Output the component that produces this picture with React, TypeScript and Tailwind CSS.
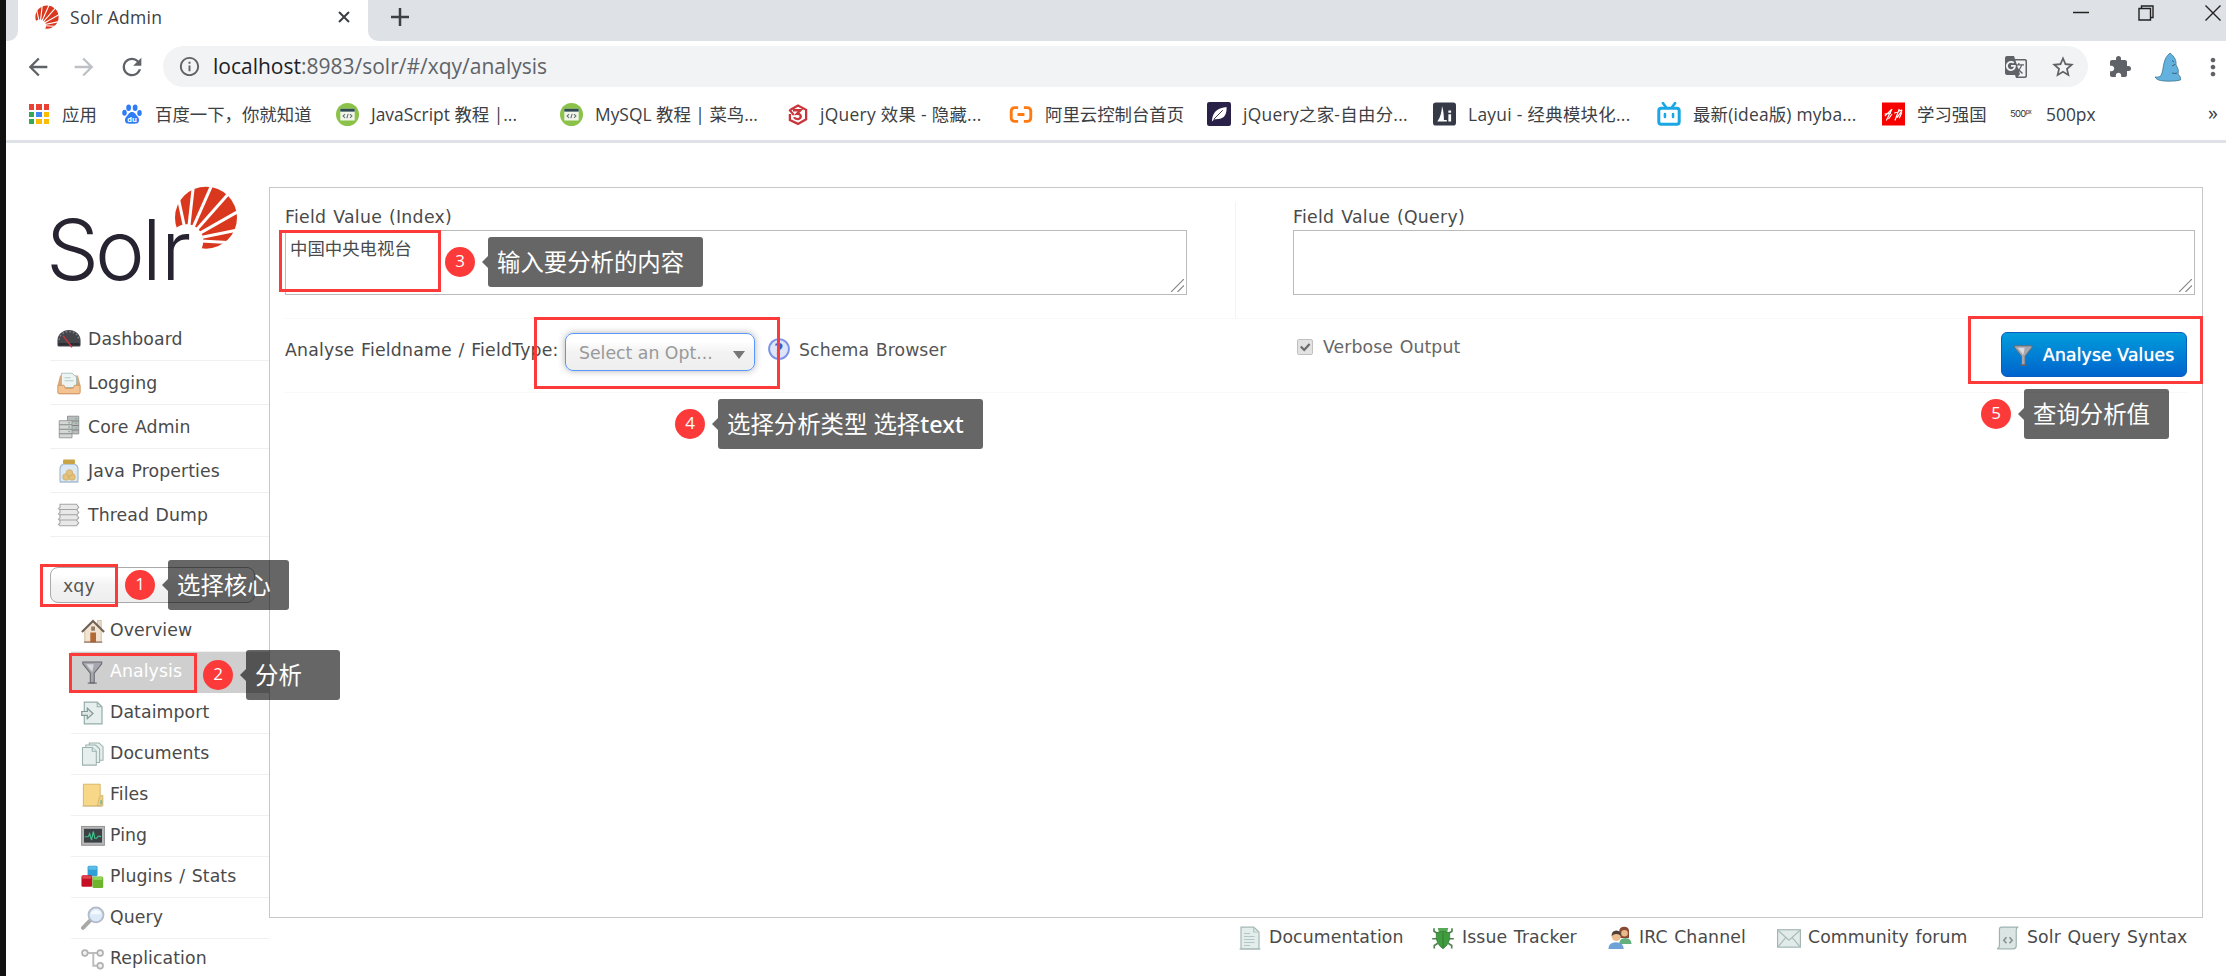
import React from 'react';
import clsx from 'clsx';
import {
  MdArrowBack,
  MdArrowForward,
  MdExtension,
  MdGTranslate,
  MdInfoOutline,
  MdMoreVert,
  MdRefresh,
  MdStarBorder,
} from 'react-icons/md';

interface IconProps {
  className?: string;
  children?: React.ReactNode;
}

function Icon({ className = 'size-6', children }: IconProps) {
  return (
    <svg viewBox="0 0 16 16" className={clsx('shrink-0', className)} fill="none">
      {children}
    </svg>
  );
}

/* ---------- Solr brand ---------- */

function Sunburst() {
  return (
    <g>
      <circle cx="618" cy="173" r="93" fill="#d9381e" />
      <path
        d="M562 241 533 105M562 241 581 70M562 241 640 65M562 241 692 94M562 241 724 149M562 241 724 208M562 241 724 250"
        stroke="#fff"
        strokeWidth="9"
      />
      <circle cx="560" cy="243" r="50" fill="#fff" />
    </g>
  );
}

function SolrLogo() {
  return (
    <svg viewBox="0 0 190 100" className="h-[100px] w-[190px] overflow-visible">
      <g transform="translate(-50 -25) scale(.33333)">
        <Sunburst />
      </g>
      <text x="-4 45 92 111" y="95" fontSize="84" fontWeight="300" fill="#282331" fontFamily="Inter, sans-serif">
        Solr
      </text>
    </svg>
  );
}

/* ---------- bookmark icons ---------- */

function AppsIcon() {
  const colors = ['#ea4335', '#ea4335', '#ea4335', '#34a853', '#4285f4', '#fbbc05', '#34a853', '#fbbc05', '#fbbc05'];
  return (
    <div className="grid h-5 w-5 shrink-0 grid-cols-3 gap-[2px]">
      {colors.map((color, i) => (
        <span key={i} style={{ backgroundColor: color }} />
      ))}
    </div>
  );
}

function BaiduIcon() {
  return (
    <Icon className="h-[22px] w-5">
      <g fill="#2f7cf6">
        <ellipse cx="5.3" cy="3" rx="1.9" ry="2.6" />
        <ellipse cx="10.5" cy="3" rx="1.9" ry="2.6" />
        <ellipse cx="2" cy="7" rx="1.8" ry="2.4" />
        <ellipse cx="14" cy="7.2" rx="1.8" ry="2.4" />
        <path d="M8 6.4c2.400 0 2.800 2 4.400 3.500 1.900 1.800 1.600 5.400-1 5.700-1.600.2-5.200.2-6.800 0-2.600-.3-2.900-3.900-1-5.700C5.200 8.400 5.600 6.400 8 6.400z" />
      </g>
      <text x="8" y="14.300" textAnchor="middle" fontSize="6" fontWeight="700" fill="#fff" fontFamily="Open Sans">du</text>
    </Icon>
  );
}

function RunoobIcon() {
  return (
    <Icon className="size-[23px]">
      <circle cx="8" cy="8" r="8" fill="#8bc34a" />
      <rect x="3" y="4" width="10" height="8.200" rx=".6" fill="#f3f5ea" />
      <rect x="3" y="4" width="10" height="2" fill="#2f4a52" />
      <path d="M6.300 7.800 4.900 9.100l1.400 1.300M9.700 7.800l1.400 1.300-1.400 1.300M8.500 7.500l-1 3.100" stroke="#5b6b6f" strokeWidth=".7" />
    </Icon>
  );
}

function JqueryEffectIcon() {
  return (
    <Icon className="h-[23px] w-5">
      <path d="M1.500 7.500v5L8 15.500l6.500-3.700V4.300L8 .8 2 4.200" stroke="#c9353b" strokeWidth="1.800" />
      <path d="M4 4.600h6L7.200 7.400c3.800-.4 3.900 4.100.8 4.300-1.500.1-2.600-.5-3.200-1.500" stroke="#c9353b" strokeWidth="1.900" />
      <path d="M1 4 4.600 8.400" stroke="#c9353b" strokeWidth="1.600" />
    </Icon>
  );
}

function AliyunIcon() {
  return (
    <Icon className="h-[23px] w-6">
      <path
        d="M6 3.200H3.600A2.400 2.400 0 0 0 1.200 5.600v4.800a2.400 2.400 0 0 0 2.400 2.400H6M10 3.200h2.400a2.400 2.400 0 0 1 2.400 2.400v4.800a2.400 2.400 0 0 1-2.400 2.400H10M5.600 8h4.800"
        stroke="#ff7a10"
        strokeWidth="2"
      />
    </Icon>
  );
}

function FeatherIcon() {
  return (
    <Icon className="h-6 w-6">
      <rect width="16" height="16" rx="1.500" fill="#292147" />
      <path d="M3.300 13c.2-4.500 2-8.800 9.700-9.600.3 3.600-.8 7-4.200 7.800-1.600.4-3 .2-4 .3z" fill="#fff" />
      <path d="M4.500 11.500 10.500 5.500" stroke="#292147" strokeWidth=".6" />
    </Icon>
  );
}

function LayuiIcon() {
  return (
    <Icon className="h-6 w-[23px]">
      <rect width="16" height="16" rx="2" fill="#363a46" />
      <path d="M3 13.200c2.200-2.600 3-6.500 3.300-10.700.9 2.800 1.300 6.400 1.300 9.600h2v1.100z" fill="#fff" />
      <path d="M10.700 8.200h1.900v5h-1.900zM10.700 5.500h1.900v1.600h-1.900z" fill="#fff" />
    </Icon>
  );
}

function BilibiliIcon() {
  return (
    <Icon className="h-6 w-6">
      <path d="M4 .8 6 3.500M12 .8 10 3.500" stroke="#1ba7e4" strokeWidth="1.800" strokeLinecap="round" />
      <rect x="1.200" y="4.200" width="13.600" height="10.600" rx="1.600" stroke="#1ba7e4" strokeWidth="2" />
      <path d="M5.300 8v2M10.700 8v2" stroke="#1ba7e4" strokeWidth="1.700" strokeLinecap="round" />
    </Icon>
  );
}

function XuexiIcon() {
  return (
    <Icon className="h-6 w-[23px]">
      <rect width="16" height="16" fill="#f60000" />
      <path
        d="M2 9.500 6.500 5M3 12.500 7 4.500M1.800 8l4.500-.5M4.500 11.500 7 8M9 12.500l3-8M8.500 7.500 14 5M10.500 10.500 14 5.500M12 11l1.800-4"
        stroke="#fff"
        strokeWidth=".8"
      />
    </Icon>
  );
}

function FiveHundredIcon() {
  return (
    <span className="w-6 shrink-0 overflow-visible whitespace-nowrap font-['Inter',sans-serif] text-[9.5px] tracking-[-0.7px] text-[#333]">
      500<sup className="text-[6px]">px</sup>
    </span>
  );
}

const bookmarks = [
  { label: '应用', icon: <AppsIcon />, width: 'w-[93px]', gap: 'gap-[13px]' },
  { label: '百度一下，你就知道', icon: <BaiduIcon />, width: 'w-[214px]', gap: 'gap-[13px]' },
  { label: 'JavaScript 教程 |...', icon: <RunoobIcon />, width: 'w-[224px]', gap: 'gap-3' },
  { label: 'MySQL 教程 | 菜鸟...', icon: <RunoobIcon />, width: 'w-[228px]', gap: 'gap-3' },
  { label: 'jQuery 效果 - 隐藏...', icon: <JqueryEffectIcon />, width: 'w-[221px]', gap: 'gap-3', tracking: 'tracking-[0.3px]' },
  { label: '阿里云控制台首页', icon: <AliyunIcon />, width: 'w-[198px]', gap: 'gap-3' },
  { label: 'jQuery之家-自由分...', icon: <FeatherIcon />, width: 'w-[226px]', gap: 'gap-3', tracking: 'tracking-[0.3px]' },
  { label: 'Layui - 经典模块化...', icon: <LayuiIcon />, width: 'w-[224px]', gap: 'gap-3', tracking: 'tracking-[0.3px]' },
  { label: '最新(idea版) myba...', icon: <BilibiliIcon />, width: 'w-[225px]', gap: 'gap-3', tracking: 'tracking-[0.2px]' },
  { label: '学习强国', icon: <XuexiIcon />, width: 'w-[128px]', gap: 'gap-3' },
  { label: '500px', icon: <FiveHundredIcon />, width: 'w-[120px]', gap: 'gap-3' },
];

/* ---------- Solr menu icons ---------- */

function DashboardIcon() {
  return (
    <Icon>
      <path d="M.3 12V9a7.700 7 0 0 1 15.400 0v3q0 1-1 1H1.300q-1 0-1-1z" fill="#45464b" />
      <path d="M1.500 8.500a6.500 5.500 0 0 1 13 0" stroke="#85868c" strokeWidth="1" strokeDasharray="1 1.400" />
      <path d="M1 11.500h14" stroke="#2c2d31" strokeWidth="1.600" />
      <path d="M4 5.800 10 13.500" stroke="#c1373c" strokeWidth="1" />
    </Icon>
  );
}

function LoggingIcon() {
  return (
    <Icon>
      <path d="M2 3h12l1.500 6v5.500q0 1-1 1h-13q-1 0-1-1V9z" fill="#d9a878" />
      <path d="M3 1.500h7l3 2.500v7H3z" fill="#edf5f4" stroke="#a3bdbb" strokeWidth=".6" />
      <path d="M5 4.500h4M5 6.500h6" stroke="#b4cbc9" strokeWidth=".8" />
      <path d="M.6 9.500h4l1 2h5l1-2h3.800v4.700q0 .9-.9.900H1.500q-.9 0-.9-.9z" fill="#f3c391" stroke="#cf9460" strokeWidth=".6" />
    </Icon>
  );
}

function ServersIcon() {
  return (
    <Icon>
      <path d="M7 .8h7.500v11.800H7z" fill="#b9bcbc" stroke="#8d8f90" strokeWidth=".6" />
      <path d="M7 4h7.500M7 7h7.500M7 10h7.500" stroke="#77797a" strokeWidth=".6" />
      <path d="M1.500 3.800H10v11.400H1.500z" fill="#d4d7d5" stroke="#939696" strokeWidth=".6" />
      <path d="M1.500 6.500H10M1.500 9.500H10M1.500 12.500H10" stroke="#858888" strokeWidth=".8" />
      <path d="M7.500 5.200h1.300M7.500 8h1.300M7.500 11h1.300M12 2.500h1.300M12 5.500h1.300M12 8.500h1.300" stroke="#8bb59a" strokeWidth="1" />
    </Icon>
  );
}

function JarIcon() {
  return (
    <Icon>
      <path d="M1.500 15.500h13" stroke="#ddd" strokeWidth="1" />
      <path d="M4 3.500h8q2 1 2 3v7.500q0 1.300-1.300 1.300H3.300Q2 15.300 2 14V6.500q0-2 2-3z" fill="#dce9f4" stroke="#a3bcd2" strokeWidth=".8" />
      <rect x="4" y=".4" width="8" height="3" rx=".7" fill="#c9a347" />
      <g fill="#e3c27d" stroke="#c9a45a" strokeWidth=".4">
        <circle cx="6" cy="12" r="2.200" />
        <circle cx="10" cy="12" r="2.200" />
        <circle cx="8.300" cy="9.300" r="2.200" />
      </g>
    </Icon>
  );
}

function ThreadsIcon() {
  return (
    <Icon>
      {[0.8, 4.3, 7.8, 11.3].map(y => (
        <path key={y} d={`M2 ${y}h11l1.500 2-1.500 1.900H2L1 ${y + 3}l1-1z`} fill="#e8e8e8" stroke="#a4a4a4" strokeWidth=".7" />
      ))}
    </Icon>
  );
}

function HouseIcon() {
  return (
    <Icon>
      <path d="M11 1h2.500v5H11z" fill="#e9dcc9" stroke="#b7a48c" strokeWidth=".4" />
      <path d="M2.500 7 8 1.800 13.500 7v8.300h-11z" fill="#f2e4d0" stroke="#c5ae90" strokeWidth=".5" />
      <path d="M.6 8.600 8 1.300l7.400 7.300" stroke="#6f625b" strokeWidth="1.400" />
      <rect x="6.200" y="9" width="3.800" height="6.500" fill="#b06a35" />
      <rect x="6.800" y="5" width="2.500" height="2.800" fill="#927a68" />
      <path d="M2 15.400h12.200" stroke="#8b5f4a" strokeWidth=".7" />
    </Icon>
  );
}

function FunnelIcon({ className }: IconProps) {
  return (
    <Icon className={className}>
      <path d="M1.200 1.300h12.600v1.200L8.800 8.800v6.400H6.200V8.800L1.200 2.500z" fill="#a6a6ae" stroke="#686870" strokeWidth=".7" />
      <path d="M3.500 2.800h5L7.500 8z" fill="#d9d9df" />
      <path d="M4.500 15.400h6" stroke="#60606a" strokeWidth=".7" />
    </Icon>
  );
}

function ImportIcon() {
  return (
    <Icon>
      <path d="M2.200.8h8.600l3.200 3v11.500H2.200z" fill="#e6efee" stroke="#95adab" strokeWidth=".8" />
      <path d="M10.800.8v3H14" stroke="#95adab" strokeWidth=".7" />
      <path d="M.5 7h3.700V4.800L8 8.300l-3.800 3.500V9.600H.5z" fill="#dfe8e6" stroke="#829997" strokeWidth=".8" />
    </Icon>
  );
}

function DocumentsIcon() {
  return (
    <Icon>
      <g fill="#e6efee" stroke="#9bb2b0" strokeWidth=".7">
        <path d="M5.500.6h6.500l2.700 2.500v9H5.500z" />
        <path d="M3.200 2h6.500l2.700 2.500v9.200H3.200z" />
        <path d="M1 3.700h6.500l2.700 2.500v9.200H1z" />
        <path d="M7.500 3.700v2.500h2.700" />
      </g>
    </Icon>
  );
}

function FolderIcon() {
  return (
    <Icon>
      <path d="M1 15.400h13" stroke="#c9bd95" strokeWidth=".7" />
      <path d="M1.600.8h11.200v14.400H1.600z" fill="#f6d888" stroke="#d4b264" strokeWidth=".6" />
      <path d="M14.600 8.200q-2.500 0-2.800 3L11 15.200h3.600z" fill="#ecd08a" stroke="#d0ad5d" strokeWidth=".5" />
      <path d="M13.500 11.500v2.800" stroke="#6dbcae" strokeWidth="1.200" />
    </Icon>
  );
}

function PingIcon() {
  return (
    <Icon>
      <rect x=".4" y="1.600" width="15.200" height="12.600" fill="#b7b7b7" stroke="#8e8e8e" strokeWidth=".6" />
      <rect x="2" y="3.200" width="12" height="9.200" fill="#3c4145" />
      <path d="M2.500 8.500h2.300l1-2 1.200 4.300L8.200 5l1 4.500h1.200l1-1.300h2" stroke="#41c08c" strokeWidth=".8" />
    </Icon>
  );
}

function PluginsIcon() {
  return (
    <Icon>
      <rect x="4.400" y=".5" width="6.600" height="7" rx="1" fill="#2f9fd6" />
      <rect x="4.900" y=".9" width="5.600" height="2.200" rx=".8" fill="#5cbce6" />
      <rect x=".3" y="6.800" width="7.200" height="7.700" rx="1" fill="#c60f22" />
      <rect x=".8" y="7.200" width="6.200" height="2" rx=".8" fill="#e04450" />
      <rect x="7.600" y="7.600" width="7.200" height="7.700" rx="1" fill="#6cb52d" />
      <rect x="8.100" y="8" width="6.200" height="2" rx=".8" fill="#94d457" />
    </Icon>
  );
}

function QueryIcon() {
  return (
    <Icon>
      <path d="M1.300 14.600 6.500 9.300" stroke="#a8a8a8" strokeWidth="2.600" strokeLinecap="round" />
      <circle cx="10" cy="5.900" r="5" fill="#dbe9f9" stroke="#b2bac6" strokeWidth="1.200" />
      <path d="M6.500 5.500a3.600 3.600 0 0 1 7 0z" fill="#f4f9ff" />
    </Icon>
  );
}

function ReplicationIcon() {
  return (
    <Icon>
      <path d="M4.500 4h7M8.200 4v8.500h3" stroke="#bcbcbc" strokeWidth="1.300" />
      <g fill="#f1f1f1" stroke="#b0b0b0" strokeWidth="1.100">
        <circle cx="2.600" cy="4" r="1.900" />
        <circle cx="12.800" cy="4" r="1.900" />
        <circle cx="12.800" cy="12.500" r="1.900" />
      </g>
    </Icon>
  );
}

const mainMenu = [
  { label: 'Dashboard', icon: <DashboardIcon /> },
  { label: 'Logging', icon: <LoggingIcon /> },
  { label: 'Core Admin', icon: <ServersIcon /> },
  { label: 'Java Properties', icon: <JarIcon /> },
  { label: 'Thread Dump', icon: <ThreadsIcon /> },
];

const coreMenu = [
  { label: 'Overview', icon: <HouseIcon /> },
  { label: 'Analysis', icon: <FunnelIcon />, active: true },
  { label: 'Dataimport', icon: <ImportIcon /> },
  { label: 'Documents', icon: <DocumentsIcon /> },
  { label: 'Files', icon: <FolderIcon /> },
  { label: 'Ping', icon: <PingIcon /> },
  { label: 'Plugins / Stats', icon: <PluginsIcon /> },
  { label: 'Query', icon: <QueryIcon /> },
  { label: 'Replication', icon: <ReplicationIcon /> },
];

/* ---------- footer icons ---------- */

function DocIcon() {
  return (
    <Icon>
      <path d="M1 15.300h14" stroke="#b4bdbc" strokeWidth=".8" />
      <path d="M2 .7h8.500L14 4v11.200H2z" fill="#e3edec" stroke="#a4b8b6" strokeWidth=".8" />
      <path d="M10.500.7V4H14M4 5h4M4 7h7M4 9h7M4 11h7M4 13h4" stroke="#b4c6c4" strokeWidth=".8" />
    </Icon>
  );
}

function BugIcon() {
  return (
    <Icon>
      <path
        d="M4.500 5 2 3.500V1.500M11.500 5 14 3.500V1.500M4 8.500H.8M12 8.500h3.200M4.500 11.500 2.200 13v2M11.500 11.500l2.300 1.500v2"
        stroke="#52804f"
        strokeWidth="1.100"
      />
      <path d="M4.500 1.300h7L10.800 4H5.200z" fill="#58a956" />
      <path d="M3.600 4.500Q8 2.500 12.400 4.500q1 7-4.400 10.700Q2.600 11.500 3.600 4.500z" fill="#3f9c3f" stroke="#337b35" strokeWidth=".5" />
      <path d="M8 4.500v10" stroke="#2f7a33" strokeWidth=".6" />
    </Icon>
  );
}

function PeopleIcon() {
  return (
    <Icon>
      <path d="M7.500 12q0-4 4-4t4.200 4z" fill="#62b07b" />
      <path d="M7.500 8V3.500q0-3 3.300-3t3.200 3V8z" fill="#8b4a35" />
      <circle cx="11" cy="4.800" r="2.200" fill="#eab98c" />
      <path d="M.3 15.300q0-4.500 5-4.500t5.200 4.500z" fill="#6ea1d8" />
      <circle cx="5.500" cy="7" r="3" fill="#ecbd8e" />
      <path d="M2.400 7q-.2-4 3.200-4t3.200 4Q8 5.300 5.600 5.300T2.400 7z" fill="#4f4137" />
    </Icon>
  );
}

function MailIcon() {
  return (
    <Icon>
      <rect x=".4" y="2.500" width="15.200" height="11.600" fill="#e1ebea" stroke="#a3b6b4" strokeWidth=".8" />
      <path d="M.8 3 8 9.500 15.200 3M.8 13.800 5.800 7.700M15.200 13.800l-5-6.100" stroke="#aabcba" strokeWidth=".8" />
    </Icon>
  );
}

function ScriptIcon() {
  return (
    <Icon>
      <path d="M3.500.7h11.300q-1.300.6-1.300 2v10.500q0 2-2 2H.8q1.500-.6 1.500-2V2Q2.300.9 3.500.7z" fill="#dbe6e4" stroke="#9fb3b1" strokeWidth=".8" />
      <path d="M7 7.500 5.200 9.500 7 11.500M9 7.500l1.800 2L9 11.500" stroke="#8b9392" strokeWidth="1.100" />
    </Icon>
  );
}

const footerLinks = [
  { label: 'Documentation', icon: <DocIcon />, width: 'w-[193px]' },
  { label: 'Issue Tracker', icon: <BugIcon />, width: 'w-[177px]' },
  { label: 'IRC Channel', icon: <PeopleIcon />, width: 'w-[169px]' },
  { label: 'Community forum', icon: <MailIcon />, width: 'w-[219px]' },
  { label: 'Solr Query Syntax', icon: <ScriptIcon />, width: 'w-[192px]' },
];

/* ---------- annotations ---------- */

interface CalloutProps {
  step: number;
  className: string;
  boxClassName: string;
  children: React.ReactNode;
}

function Callout({ step, className, boxClassName, children }: CalloutProps) {
  return (
    <div className={clsx('absolute flex items-center', className)}>
      <span className="flex size-[30px] items-center justify-center rounded-full bg-[#fd3a3a] pb-[3px] font-['Open_Sans',sans-serif] text-[17px] text-white">
        {step}
      </span>
      <span className="ml-[7px] border-y-[6px] border-r-[6px] border-y-transparent border-r-black/60" />
      <span
        className={clsx(
          "flex h-[50px] items-center whitespace-pre rounded-[3px] bg-black/60 pl-[9px] pt-[1px] font-['Noto_Sans','Noto_Sans_CJK_SC',sans-serif] text-[23.4px] text-white",
          boxClassName,
        )}
      >
        {children}
      </span>
    </div>
  );
}

function Highlight({ className }: { className: string }) {
  return <div className={clsx('absolute border-[3px] border-[#fd3a3a]', className)} />;
}

/* ---------- browser frame ---------- */

function TabStrip() {
  return (
    <div className="flex h-[41px] bg-[#dee1e6]">
      <div className="w-3 bg-white">
        <div className="h-full rounded-br-[10px] bg-[#dee1e6]" />
      </div>
      <div className="flex w-[350px] items-center bg-white pb-[7px] pl-[17px] pr-[18px]">
        <svg viewBox="522 77 192 192" className="size-6">
          <Sunburst />
        </svg>
        <span className="ml-[11px] flex-1 text-[17.5px] tracking-[0.3px] text-[#3c4043]">Solr Admin</span>
        <svg viewBox="0 0 12 12" className="size-3" stroke="#3c4043" strokeWidth="2">
          <path d="M1 1l10 10M11 1 1 11" />
        </svg>
      </div>
      <div className="flex-1 bg-white">
        <div className="flex h-full items-start justify-between rounded-bl-[10px] bg-[#dee1e6] pl-[23px] pr-[5px]">
          <svg viewBox="0 0 18 18" className="mt-[8px] size-[18px]" stroke="#3c4043" strokeWidth="2.500">
            <path d="M9 0v18M0 9h18" />
          </svg>
          <div className="mt-[5px] flex items-center">
            <svg viewBox="0 0 16 16" className="mr-[49px] size-4" stroke="#222" strokeWidth="1.500">
              <path d="M0 7.500h16" />
            </svg>
            <svg viewBox="0 0 16 16" className="mr-[51px] size-4" fill="none" stroke="#222" strokeWidth="1.400">
              <path d="M1 3.500h11.500V15H1zM3.500 3.500V1H15v11.500h-2.500" />
            </svg>
            <svg viewBox="0 0 16 16" className="size-4" stroke="#222" strokeWidth="1.400">
              <path d="M.5.5l15 15M15.500.5l-15 15" />
            </svg>
          </div>
        </div>
      </div>
    </div>
  );
}

function AvatarIcon() {
  return (
    <svg viewBox="0 0 28 30" className="ml-[22px] h-[30px] w-7 shrink-0">
      <path
        d="M1 25q6 1 7-4c2-7 1-14 8-20 5 4 6.500 8 6 12 2 3 3 6 2 9 2 2 3 4 2.500 6-5 1.500-15 1.500-20 .5C4 28 2 27 1 25z"
        fill="#62b1df"
        stroke="#3d7591"
        strokeWidth=".8"
      />
      <path d="M18 8.500l2 1.500M18 14q3-1 3-2M18 21q3 1 5 0" stroke="#36596b" strokeWidth=".9" fill="none" />
    </svg>
  );
}

function Toolbar() {
  return (
    <div className="flex h-[51px] items-center pl-[18px] text-[#5f6368]">
      <MdArrowBack className="size-[28px] shrink-0" />
      <MdArrowForward className="ml-[18px] size-[28px] shrink-0 text-[#bdc1c6]" />
      <MdRefresh className="ml-[20px] size-[28px] shrink-0" />
      <div className="ml-[17px] flex h-[41px] w-[1925px] shrink-0 items-center rounded-full bg-[#f1f3f4] pl-[15px] pr-[12px]">
        <MdInfoOutline className="size-[23px]" />
        <span className="ml-[12px] flex-1 text-[21px] text-[#5f6368]">
          <span className="text-[#202124]">localhost</span>:8983/solr/#/xqy/analysis
        </span>
        <MdGTranslate className="mr-[22px] size-6" />
        <MdStarBorder className="size-[26px]" />
      </div>
      <MdExtension className="ml-[20px] size-6 shrink-0" />
      <AvatarIcon />
      <MdMoreVert className="ml-[17px] size-7 shrink-0" />
    </div>
  );
}

function BookmarkBar() {
  return (
    <div className="flex h-[51px] items-center border-b-[3px] border-[#dee1e6] pb-[3px] pl-[23px]">
      {bookmarks.map(item => (
        <div key={item.label} className={clsx('flex shrink-0 items-center', item.width, item.gap)}>
          {item.icon}
          <span className={clsx('whitespace-nowrap text-[17.4px] text-[#3c4043]', item.tracking)}>{item.label}</span>
        </div>
      ))}
      <span className="ml-auto mr-[8px] pb-1 text-[20px] text-[#3c4043]">»</span>
    </div>
  );
}

/* ---------- page ---------- */

function Sidebar() {
  return (
    <aside className="w-[263px] shrink-0 pl-[44px] pt-[42px]">
      <SolrLogo />
      <ul className="mt-[32px]">
        {mainMenu.map(item => (
          <li key={item.label} className="flex h-[44px] items-center gap-[7px] border-b border-[#f0f0f0] pl-[7px]">
            {item.icon}
            <span className="pt-[2px]">{item.label}</span>
          </li>
        ))}
      </ul>
      <div className="mt-[30px] flex h-[36px] w-[205px] items-center rounded-lg border border-[#aaa] bg-linear-to-b from-white from-20% via-[#f3f3f3] via-50% to-[#eee] pl-[12px] pt-[3px] text-[#555]">
        xqy
      </div>
      <ul className="ml-[21px] mt-[8px]">
        {coreMenu.map(item => (
          <li
            key={item.label}
            className={clsx(
              'flex h-[41px] items-center gap-[5px] border-b pl-[10px]',
              item.active ? 'border-[#cfcfcf] bg-[#cfcfcf] text-white' : 'border-[#f0f0f0]',
            )}
          >
            {item.icon}
            <span>{item.label}</span>
          </li>
        ))}
      </ul>
    </aside>
  );
}

function FieldBox({ label, value }: { label: string; value?: string }) {
  return (
    <div className="w-[902px]">
      <div className="h-[28px] pt-[3px] leading-[25px] tracking-[0.3px]">{label}</div>
      <div className="flex h-[65px] items-end justify-between border border-[#bbb]">
        <span className="self-start pl-[4px] pt-[4px] font-['Noto_Sans_CJK_SC',sans-serif] text-[17.4px] leading-[26px] tracking-normal">
          {value}
        </span>
        <svg viewBox="0 0 13 13" className="mb-[2px] mr-[2px] size-[13px]" stroke="#888" strokeWidth="1.200">
          <path d="M0 13 13 0M6.500 13 13 6.500" />
        </svg>
      </div>
    </div>
  );
}

function AnalysisPanel() {
  return (
    <section className="h-[731px] w-[1934px] border border-[#c8c8c8] pl-[15px] pr-[15px] pt-[14px]">
      <div className="flex h-[116px]">
        <div className="w-[951px] shrink-0 border-r border-[#f3f3f3]">
          <FieldBox label="Field Value (Index)" value="中国中央电视台" />
        </div>
        <div className="shrink-0 pl-[57px]">
          <FieldBox label="Field Value (Query)" />
        </div>
      </div>
      <div className="flex h-[75px] items-start border-y border-[#f8f8f8] leading-5">
        <span className="mt-[21px] w-[280px] whitespace-nowrap tracking-[0.2px]">Analyse Fieldname / FieldType:</span>
        <div className="mt-[14px] flex h-[38px] w-[190px] items-center justify-between rounded-lg border border-[#5897fb] bg-linear-to-b from-white from-20% via-[#f3f3f3] via-50% to-[#eee] pl-[13px] pr-[9px] pt-[2px] tracking-normal text-[#999] shadow-[0_0_7px_rgba(0,0,0,0.3)] [word-spacing:0]">
          Select an Opt...
          <span className="mt-[3px] border-x-[6px] border-t-[8px] border-x-transparent border-t-[#777]" />
        </div>
        <Icon className="ml-[13px] mt-[19px] size-[22px]">
          <circle cx="8" cy="8" r="7.200" fill="#dfe5f8" stroke="#7d93e6" strokeWidth="1.400" />
          <text x="8" y="12.200" textAnchor="middle" fontSize="11.500" fontWeight="700" fill="#3f5bc9" fontFamily="DejaVu Sans">?</text>
        </Icon>
        <span className="ml-[9px] mt-[21px] w-[498px] text-[#555]">Schema Browser</span>
        <Icon className="mt-[20px] size-[16px]">
          <rect x=".5" y=".5" width="15" height="15" rx="1.500" fill="#e2e2e2" stroke="#c0c0c0" />
          <path d="M3.800 7.500 7.200 11 12.600 5" stroke="#6b6b6b" strokeWidth="2.200" />
        </Icon>
        <span className="ml-[10px] mt-[18px] text-[#666]">Verbose Output</span>
        <button className="ml-auto mt-[13px] flex h-[45px] w-[186px] items-center rounded-md border border-[#0a5cc0] bg-linear-to-b from-[#049cdb] to-[#0064cd] pl-[11px] pt-[1px] text-[17.3px] tracking-[0.1px] text-white [text-shadow:0_0_1px_#fff]">
          <FunnelIcon className="size-[22px]" />
          <span className="ml-[8px] whitespace-nowrap">Analyse Values</span>
        </button>
      </div>
    </section>
  );
}

export default function App() {
  return (
    <div className="relative flex h-[976px] w-[2226px] overflow-hidden bg-white font-['Open_Sans','Noto_Sans_CJK_SC',sans-serif]">
      <div className="w-1.5 shrink-0 bg-[#111]" />
      <div className="min-w-0 flex-1">
        <TabStrip />
        <Toolbar />
        <BookmarkBar />
        <div className="flex font-['DejaVu_Sans','Noto_Sans_CJK_SC',sans-serif] text-[17.3px] tracking-[0.1px] text-[#4a4a4a] [word-spacing:1px]">
          <Sidebar />
          <div className="pt-[44px]">
            <AnalysisPanel />
            <footer className="flex justify-end pr-[15px] pt-[7px]">
              {footerLinks.map(link => (
                <div key={link.label} className={clsx('flex items-center gap-[7px] whitespace-nowrap', link.width)}>
                  {link.icon}
                  {link.label}
                </div>
              ))}
            </footer>
          </div>
        </div>
      </div>

      <Highlight className="left-[40px] top-[564px] h-[43px] w-[78px]" />
      <Callout step={1} className="left-[125px] top-[560px]" boxClassName="w-[121px]">
        选择核心
      </Callout>
      <Highlight className="left-[69px] top-[653px] h-[40px] w-[128px]" />
      <Callout step={2} className="left-[203px] top-[650px]" boxClassName="w-[94px]">
        分析
      </Callout>
      <Highlight className="left-[279px] top-[230px] h-[62px] w-[162px]" />
      <Callout step={3} className="left-[445px] top-[237px]" boxClassName="w-[215px]">
        输入要分析的内容
      </Callout>
      <Highlight className="left-[534px] top-[317px] h-[72px] w-[246px]" />
      <Callout step={4} className="left-[675px] top-[399px]" boxClassName="w-[265px]">
        选择分析类型 选择<span className="font-medium">text</span>
      </Callout>
      <Highlight className="left-[1968px] top-[316px] h-[68px] w-[235px]" />
      <Callout step={5} className="left-[1981px] top-[389px]" boxClassName="w-[145px]">
        查询分析值
      </Callout>
    </div>
  );
}
